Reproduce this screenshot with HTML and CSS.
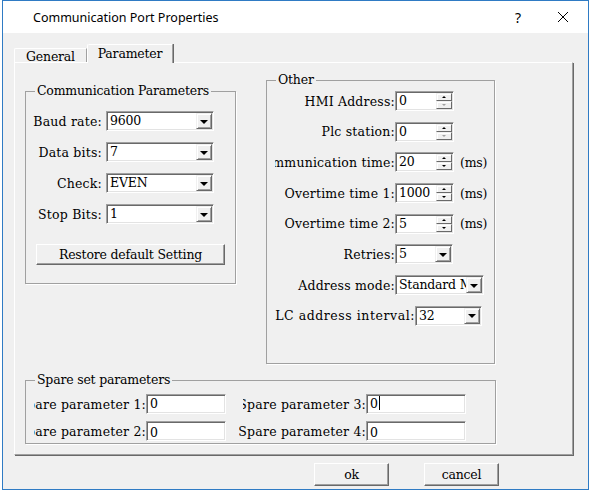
FILE: index.html
```html
<!DOCTYPE html>
<html>
<head>
<meta charset="utf-8">
<link rel="stylesheet" href="styles.css">
</head>
<body>
<div class="window">
  <div class="titlebar">
    <span class="title">Communication Port Properties</span>
    <span class="help">?</span>
    <svg class="close" width="12" height="12" viewBox="0 0 12 12"><path d="M1 1 L11 11 M11 1 L1 11" stroke="#000" stroke-width="1" fill="none"/></svg>
  </div>
  <div class="body">
    <div class="tabs">
      <div class="tab">General</div>
      <div class="tab active">Parameter</div>
    </div>
    <div class="panel">
      <div class="groups">
        <fieldset class="group comm">
          <legend>Communication Parameters</legend>
          <div class="comm-grid">
            <span class="lbl">Baud rate:</span>
            <div class="field combo"><span class="val">9600</span><span class="drop"><i class="arrow"></i></span></div>
            <span class="lbl">Data bits:</span>
            <div class="field combo"><span class="val">7</span><span class="drop"><i class="arrow"></i></span></div>
            <span class="lbl">Check:</span>
            <div class="field combo"><span class="val">EVEN</span><span class="drop"><i class="arrow"></i></span></div>
            <span class="lbl">Stop Bits:</span>
            <div class="field combo"><span class="val">1</span><span class="drop"><i class="arrow"></i></span></div>
          </div>
          <div class="btn restore">Restore default Setting</div>
        </fieldset>
        <fieldset class="group other">
          <legend>Other</legend>
          <div class="other-rows">
            <div class="row"><span class="clip w120"><span>HMI Address:</span></span>
              <div class="field spin"><span class="val">0</span><span class="spins"><span class="sb"><i class="up"></i></span><span class="sb"><i class="dn dis"></i></span></span></div></div>
            <div class="row"><span class="clip w120"><span>Plc station:</span></span>
              <div class="field spin"><span class="val">0</span><span class="spins"><span class="sb"><i class="up"></i></span><span class="sb"><i class="dn dis"></i></span></span></div></div>
            <div class="row"><span class="clip w120"><span>Communication time:</span></span>
              <div class="field spin"><span class="val">20</span><span class="spins"><span class="sb"><i class="up"></i></span><span class="sb"><i class="dn"></i></span></span></div><span class="unit">(ms)</span></div>
            <div class="row"><span class="clip w120"><span>Overtime time 1:</span></span>
              <div class="field spin"><span class="val">1000</span><span class="spins"><span class="sb"><i class="up"></i></span><span class="sb"><i class="dn"></i></span></span></div><span class="unit">(ms)</span></div>
            <div class="row"><span class="clip w120"><span>Overtime time 2:</span></span>
              <div class="field spin"><span class="val">5</span><span class="spins"><span class="sb"><i class="up"></i></span><span class="sb"><i class="dn"></i></span></span></div><span class="unit">(ms)</span></div>
            <div class="row"><span class="clip w120"><span>Retries:</span></span>
              <div class="field combo retries"><span class="val">5</span><span class="drop"><i class="arrow"></i></span></div></div>
            <div class="row"><span class="clip w120"><span>Address mode:</span></span>
              <div class="field combo mode"><span class="val">Standard Mode</span><span class="drop"><i class="arrow"></i></span></div></div>
            <div class="row"><span class="clip w140"><span>PLC address interval:</span></span>
              <div class="field combo interval"><span class="val">32</span><span class="drop"><i class="arrow"></i></span></div></div>
          </div>
        </fieldset>
      </div>
      <fieldset class="group spare">
        <legend>Spare set parameters</legend>
        <div class="spare-row first">
          <span class="clip w112"><span>Spare parameter 1:</span></span>
          <div class="field text t1"><span class="val">0</span></div>
          <span class="clip w123 sp2"><span>Spare parameter 3:</span></span>
          <div class="field text t2"><span class="val">0<i class="caret"></i></span></div>
        </div>
        <div class="spare-row second">
          <span class="clip w112"><span>Spare parameter 2:</span></span>
          <div class="field text t1"><span class="val low">0</span></div>
          <span class="clip w127 sp4"><span>Spare parameter 4:</span></span>
          <div class="field text t2"><span class="val low">0</span></div>
        </div>
      </fieldset>
    </div>
    <div class="buttons">
      <div class="btn dlg">ok</div>
      <div class="btn dlg">cancel</div>
    </div>
  </div>
</div>
</body>
</html>
```

FILE: styles.css
```css
* { box-sizing: border-box; }
body {
  margin: 0;
  background: #fff;
  font-family: "DejaVu Serif", "Liberation Serif", serif;
  font-size: 12.5px;
  letter-spacing: -0.2px;
  color: #000;
}
.window {
  margin-left: 2px;
  width: 587px;
  height: 490px;
  border: 1px solid #2f7bc4;
  background: #f0f0f0;
}
.titlebar {
  height: 32px;
  background: #fff;
  display: flex;
  align-items: center;
  font-family: "Noto Sans", "Open Sans", sans-serif;
  letter-spacing: 0;
  font-size: 12.5px;
}
.title { margin-left: 30px; flex: 1; }
.help { font-size: 14px; margin-right: 36px; font-family: "Noto Sans", sans-serif; }
.close { margin-right: 19px; }
.body { height: 456px; }
.tabs {
  margin-top: 11px;
  padding-left: 11px;
  height: 18px;
  display: flex;
  align-items: flex-end;
}
.tab {
  height: 14px;
  width: 73px;
  display: flex;
  align-items: center;
  justify-content: center;
  border-top: 1px solid #fff;
  border-left: 1px solid #fff;
  border-right: 1px solid #a0a0a0;
  border-top-left-radius: 2px;
  line-height: 12px;
  padding-top: 2px;
}
.tab.active {
  height: 19px;
  width: 86px;
  margin-bottom: -1px;
  position: relative;
  z-index: 1;
  background: #f0f0f0;
  border-right: 1px solid #a0a0a0;
  box-shadow: 1px 0 0 #696969;
  padding-top: 0;
  padding-bottom: 1px;
}
.panel {
  margin-left: 11px;
  width: 559px;
  height: 393px;
  border-top: 1px solid #fff;
  border-left: 1px solid #fff;
  border-right: 1px solid #a0a0a0;
  border-bottom: 1px solid #a0a0a0;
  box-shadow: 1px 1px 0 #696969;
  padding: 9px 0 0 10px;
}
.groups { display: flex; align-items: flex-start; }
.group {
  margin: 0;
  padding: 0;
  border: 1px solid #a0a0a0;
  box-shadow: 1px 1px 0 #fff;
  min-width: 0;
}
.group legend {
  margin-left: 9px;
  padding: 0 2px;
  line-height: 16px;
  height: 16px;
}
.comm { margin-top: 11px; width: 211px; height: 201px; }
.other { margin-left: 30px; width: 229px; height: 292px; }
.spare { margin-top: 8px; width: 471px; height: 72px; }

.comm-grid {
  display: grid;
  grid-template-columns: 76px 108px;
  column-gap: 4px;
  row-gap: 11px;
  padding-top: 12px;
  align-items: center;
}
.lbl { text-align: right; white-space: nowrap; letter-spacing: 0.2px; }

.field {
  background: #fff;
  height: 20px;
  border: 1px solid;
  border-color: #a0a0a0 #fff #fff #a0a0a0;
  box-shadow: inset 1px 1px 0 #696969, inset -1px -1px 0 #e3e3e3;
  display: flex;
  align-items: center;
  padding: 1px;
  position: relative;
  overflow: hidden;
}
.val {
  flex: 1;
  padding-left: 2px;
  white-space: nowrap;
  overflow: hidden;
  line-height: 16px;
}
.drop {
  width: 16px;
  height: 16px;
  flex: none;
  background: #f0f0f0;
  border: 1px solid;
  border-color: #f0f0f0 #696969 #696969 #f0f0f0;
  box-shadow: inset 1px 1px 0 #fff, inset -1px -1px 0 #a0a0a0;
  display: flex;
  align-items: center;
  justify-content: center;
}
.arrow {
  width: 0; height: 0;
  border-left: 4px solid transparent;
  border-right: 4px solid transparent;
  border-top: 4px solid #000;
  margin-top: 1px;
}
.spins { width: 16px; height: 16px; display: flex; flex-direction: column; flex: none; }
.sb {
  height: 8px;
  background: #f0f0f0;
  border: 1px solid;
  border-color: #f0f0f0 #696969 #696969 #f0f0f0;
  box-shadow: inset 1px 1px 0 #fff;
  display: flex;
  align-items: center;
  justify-content: center;
}
.up { width: 0; height: 0; border-left: 2px solid transparent; border-right: 2px solid transparent; border-bottom: 2px solid #000; }
.dn { width: 0; height: 0; border-left: 2px solid transparent; border-right: 2px solid transparent; border-top: 2px solid #000; }
.dn.dis { border-top-color: #a0a0a0; }

.btn {
  background: #f0f0f0;
  border: 1px solid;
  border-color: #fff #696969 #696969 #fff;
  box-shadow: inset -1px -1px 0 #a0a0a0;
  display: flex;
  align-items: center;
  justify-content: center;
  white-space: nowrap;
}
.restore { margin: 20px 0 0 10px; width: 189px; height: 21px; }

.other-rows {
  padding: 3px 0 0 8px;
  display: flex;
  flex-direction: column;
  gap: 10.7px;
}
.row { display: flex; align-items: center; height: 20px; }
.clip {
  display: flex;
  justify-content: flex-end;
  overflow: hidden;
  white-space: nowrap;
  flex: none;
}
.clip > span { flex: none; letter-spacing: 0.2px; }
.clip.w140 > span { letter-spacing: 0.56px; }
.w120 { width: 120px; }
.w140 { width: 140px; }
.w112 { width: 112px; }
.w123 { width: 123px; }
.w127 { width: 127px; }
.spin { width: 59px; height: 20px; }
.retries { width: 58px; }
.mode { width: 89px; }
.interval { width: 67px; }
.unit { margin-left: 6px; }

.spare-row {
  display: flex;
  align-items: center;
  padding-left: 8px;
  height: 20px;
}
.spare-row.first { margin-top: 6px; }
.spare-row.second { margin-top: 7px; }
.text.t1 { width: 80px; }
.text.t2 { width: 100px; }
.sp2 { margin-left: 17px; }
.sp4 { margin-left: 13px; }
.val.low { padding-top: 3px; }
.caret {
  display: inline-block;
  width: 1px;
  height: 14px;
  background: #000;
  vertical-align: -2px;
  margin-left: 1px;
}
.buttons {
  margin-top: 8px;
  display: flex;
  justify-content: flex-end;
  gap: 35px;
  padding-right: 89px;
}
.dlg { width: 75px; height: 23px; }
```
